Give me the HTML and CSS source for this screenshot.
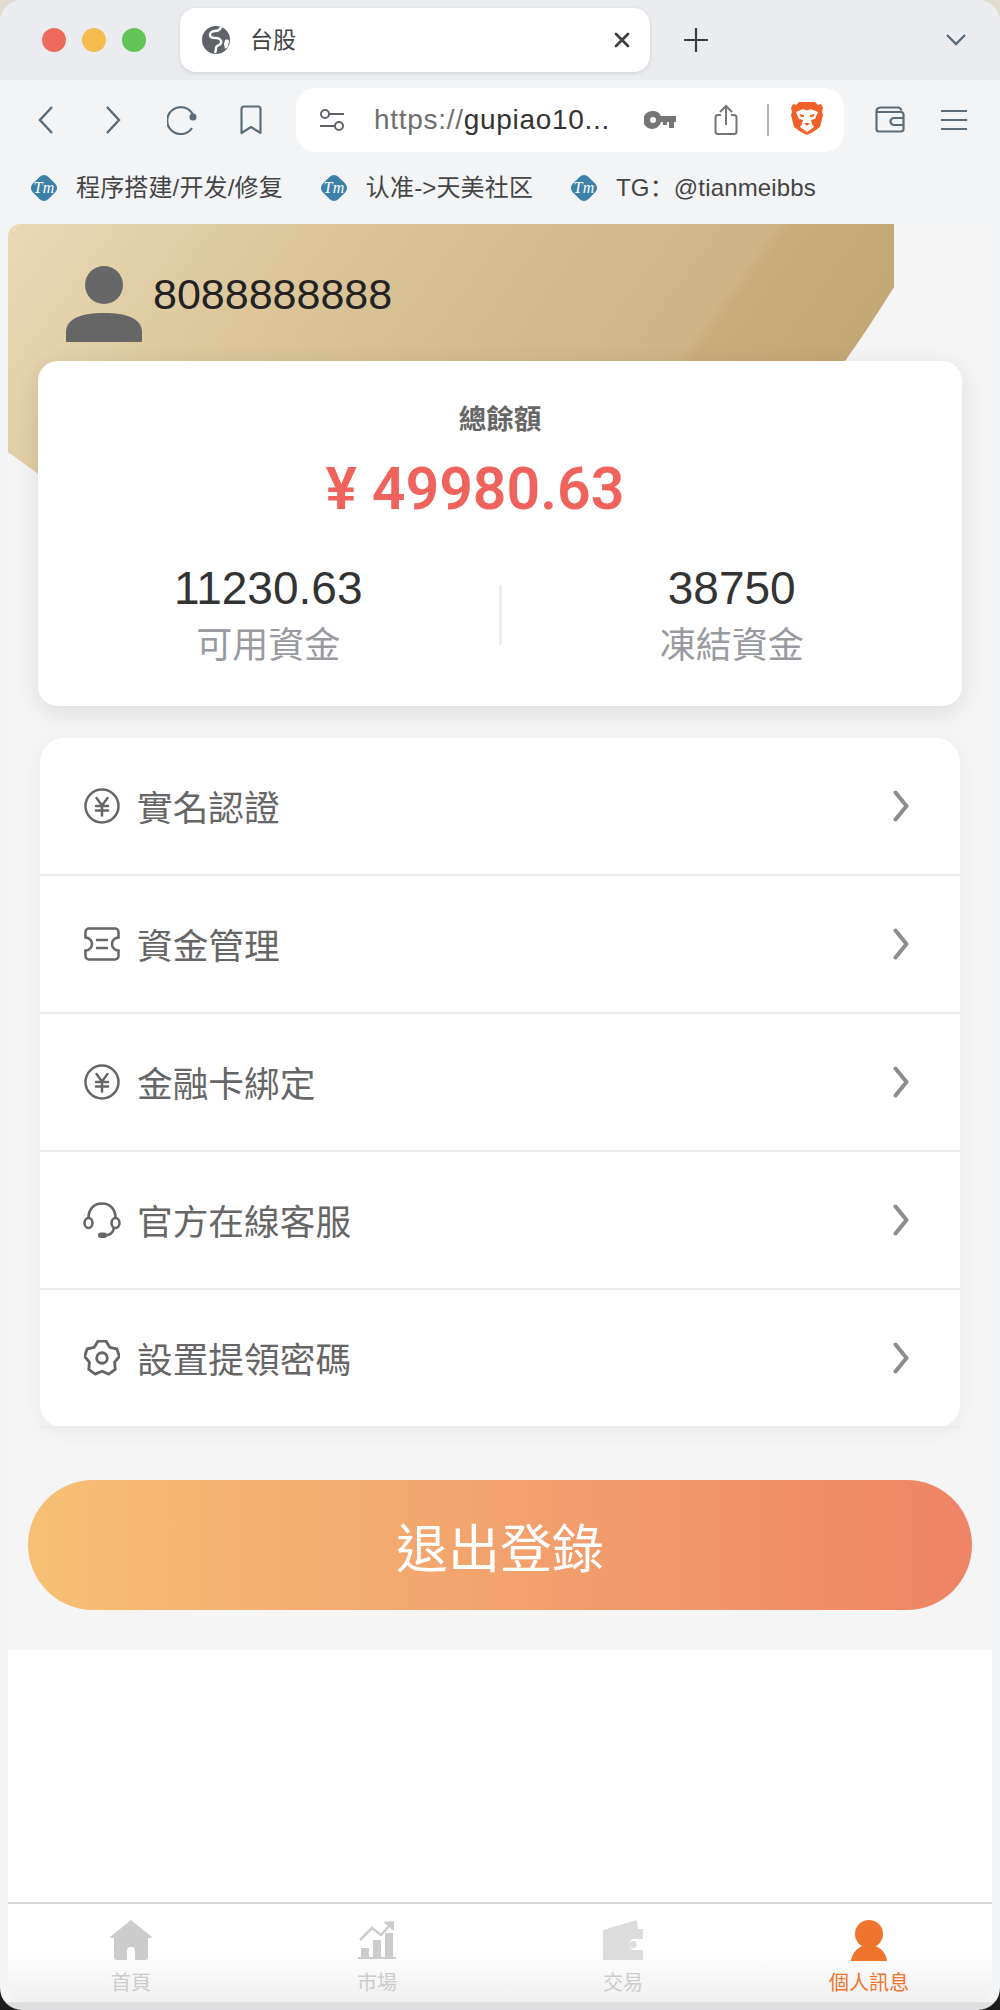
FILE: index.html
```html
<!DOCTYPE html>
<html lang="zh-Hant">
<head>
    <meta charset="UTF-8">
    <meta name="viewport" content="width=device-width, initial-scale=1.0">
    <title>台股</title>
    <link rel="stylesheet" href="styles.css">
</head>
<body>
    <svg class="defs" width="0" height="0">
        <symbol id="yen" viewBox="0 0 36 36">
            <circle cx="18" cy="18" r="16.5" fill="none" stroke="currentColor" stroke-width="2.5"/>
            <path d="M12.500 10l5.500 7.500 5.500-7.500M12 18h12M12 22.500h12M18 17.500v10" fill="none" stroke="currentColor" stroke-width="2.500" stroke-linecap="round"/>
        </symbol>
        <symbol id="arrow" viewBox="0 0 16 32">
            <path d="M2.500 2.500L13.500 16 2.500 29.500" fill="none" stroke="currentColor" stroke-width="4" stroke-linecap="round" stroke-linejoin="round"/>
        </symbol>
    </svg>

    <div class="window">
        <!-- tabs -->
        <div class="tabstrip">
            <div class="lights">
                <span class="light light-red"></span>
                <span class="light light-yellow"></span>
                <span class="light light-green"></span>
            </div>
            <div class="tab">
                <svg class="globe" viewBox="0 0 28 28" width="28" height="28">
                    <circle cx="14" cy="14" r="14" fill="#5f6368"/>
                    <path d="M19 1c-1 3-3 4-6 4S8 7 8 9s3 3 6 3 6 2 5 5-5 2-5 5 0 3-1 5" fill="none" stroke="#fff" stroke-width="2.400"/>
                    <path d="M23 14c2-1 4 0 4 1l-1 6-3 2-1-5z" fill="#fff"/>
                </svg>
                <span class="tab-title">台股</span>
                <svg class="tab-close" viewBox="0 0 16 16" width="16" height="16">
                    <path d="M2 2l12 12M14 2L2 14" stroke="#3c4043" stroke-width="2.800" stroke-linecap="round"/>
                </svg>
            </div>
            <svg class="tab-new" viewBox="0 0 24 24" width="24" height="24">
                <path d="M12 0v24M0 12h24" stroke="#3c4043" stroke-width="2.200"/>
            </svg>
            <svg class="tab-list" viewBox="0 0 20 12" width="20" height="12">
                <path d="M1 1l9 9 9-9" fill="none" stroke="#5b6c78" stroke-width="2.400"/>
            </svg>
        </div>

        <!-- toolbar -->
        <div class="toolbar">
            <svg class="tool tool-back" viewBox="0 0 16 28" width="16" height="28">
                <path d="M14 1L2 14l12 13" fill="none" stroke="#5b6c78" stroke-width="2.400"/>
            </svg>
            <svg class="tool tool-forward" viewBox="0 0 16 28" width="16" height="28">
                <path d="M2 1l12 13L2 27" fill="none" stroke="#5b6c78" stroke-width="2.400"/>
            </svg>
            <svg class="tool tool-reload" viewBox="0 0 30 30" width="30" height="30">
                <path d="M25 23a13.500 13.500 0 1 1 1-13" fill="none" stroke="#5b6c78" stroke-width="2.200"/>
                <circle cx="26" cy="12" r="3.500" fill="#5b6c78"/>
            </svg>
            <svg class="tool tool-mark" viewBox="0 0 22 30" width="22" height="30">
                <path d="M1.500 4a2.500 2.500 0 0 1 2.500-2.500h14a2.500 2.500 0 0 1 2.500 2.500v24L11 22l-9.500 6z" fill="none" stroke="#5b6c78" stroke-width="2.200" stroke-linejoin="round"/>
            </svg>

            <div class="urlbar">
                <svg class="url-tune" viewBox="0 0 26 24" width="26" height="24">
                    <circle cx="6" cy="6" r="4" fill="none" stroke="#5f6368" stroke-width="2"/>
                    <circle cx="20" cy="18" r="4" fill="none" stroke="#5f6368" stroke-width="2"/>
                    <path d="M10 6h15M1 18h15" stroke="#5f6368" stroke-width="2"/>
                </svg>
                <span class="url-text"><span class="url-scheme">https://</span>gupiao10...</span>
                <svg class="url-key" viewBox="0 0 32 20" width="32" height="20">
                    <path d="M9 1a9 9 0 0 1 8 5h15v6h-2v6h-5v-6h-2v3h-4v-3h-2A9 9 0 1 1 9 1zm0 6a3 3 0 1 0 0 6 3 3 0 0 0 0-6z" fill="#757575" fill-rule="evenodd"/>
                </svg>
                <svg class="url-share" viewBox="0 0 24 32" width="24" height="32">
                    <path d="M7 11H4a2.500 2.500 0 0 0-2.500 2.500v14A2.500 2.500 0 0 0 4 30h16a2.500 2.500 0 0 0 2.500-2.500v-14A2.500 2.500 0 0 0 20 11h-3M12 21V2M6 8l6-6 6 6" fill="none" stroke="#757575" stroke-width="2"/>
                </svg>
                <span class="url-sep"></span>
                <svg class="url-brave" viewBox="0 0 32 36" width="32" height="36">
                    <path d="M8 0h16l3 3 3-1 2 4-1 4 1 3-2 8-1 4-7 5-6 3-6-3-7-5-1-4-2-8 1-3-1-4 2-4 3 1z" fill="#ef6128"/>
                    <path d="M5 10l7-3 4 1.500L20 7l7 3-3 7-4 1 1 4 2 3-7 5-7-5 2-3 1-4-4-1z" fill="#fff"/>
                    <path d="M8 12l5 1 0 2-3 0zM24 12l-5 1 0 2 3 0zM13 21h6l-3 3z" fill="#ef6128"/>
                </svg>
            </div>

            <svg class="tool tool-wallet" viewBox="0 0 30 28" width="30" height="28">
                <path d="M1.500 6a4 4 0 0 1 4-4.500h18a4 4 0 0 1 3 3M1.500 6v17a2.500 2.500 0 0 0 2.500 2.500h22a2.500 2.500 0 0 0 2.500-2.500V8.500A2.500 2.500 0 0 0 26 6H1.500zM28.500 12H19a3.500 3.500 0 0 0 0 7h9.500" fill="none" stroke="#5b6c78" stroke-width="2.200"/>
            </svg>
            <svg class="tool tool-menu" viewBox="0 0 26 22" width="26" height="22">
                <path d="M0 2h26M0 11h26M0 20h26" stroke="#5b6c78" stroke-width="2"/>
            </svg>
        </div>

        <!-- bookmarks -->
        <div class="bookmarks" lang="zh-CN">
            <div class="bookmark">
                <svg viewBox="0 0 30 30" width="30" height="30">
                    <rect x="4" y="4" width="22" height="22" rx="6" transform="rotate(45 15 15)" fill="#3d81a9"/>
                    <text x="15" y="20" text-anchor="middle" class="tm-text">Tm</text>
                </svg>
                <span>程序搭建/开发/修复</span>
            </div>
            <div class="bookmark">
                <svg viewBox="0 0 30 30" width="30" height="30">
                    <rect x="4" y="4" width="22" height="22" rx="6" transform="rotate(45 15 15)" fill="#3d81a9"/>
                    <text x="15" y="20" text-anchor="middle" class="tm-text">Tm</text>
                </svg>
                <span>认准-&gt;天美社区</span>
            </div>
            <div class="bookmark">
                <svg viewBox="0 0 30 30" width="30" height="30">
                    <rect x="4" y="4" width="22" height="22" rx="6" transform="rotate(45 15 15)" fill="#3d81a9"/>
                    <text x="15" y="20" text-anchor="middle" class="tm-text">Tm</text>
                </svg>
                <span>TG：@tianmeibbs</span>
            </div>
        </div>

        <!-- page -->
        <div class="page">
            <div class="account">
                <div class="account-bg"></div>

                <div class="user">
                    <svg class="user-pic" viewBox="0 0 76 76" width="76" height="76">
                        <circle cx="38" cy="19" r="19" fill="#666"/>
                        <path d="M0 76V66C0 52 17 47 38 47s38 5 38 19v10z" fill="#666"/>
                    </svg>
                    <span class="user-name">8088888888</span>
                </div>

                <div class="balance">
                    <div class="balance-title">總餘額</div>
                    <div class="balance-total">¥ 49980.63</div>
                    <div class="stats">
                        <div class="stat">
                            <div class="stat-value">11230.63</div>
                            <div class="stat-label">可用資金</div>
                        </div>
                        <div class="stat-line"></div>
                        <div class="stat">
                            <div class="stat-value">38750</div>
                            <div class="stat-label">凍結資金</div>
                        </div>
                    </div>
                </div>

                <ul class="menu">
                    <li class="menu-row">
                        <svg class="menu-icon" width="36" height="36"><use href="#yen"/></svg>
                        <span>實名認證</span>
                        <svg class="menu-arrow" width="16" height="32"><use href="#arrow"/></svg>
                    </li>
                    <li class="menu-row">
                        <svg class="menu-icon" viewBox="0 0 36 36" width="36" height="36">
                            <path d="M5 2.500h26A3.500 3.500 0 0 1 34.500 6v5.500a6.500 6.500 0 0 0 0 13V30a3.500 3.500 0 0 1-3.500 3.500H5A3.500 3.500 0 0 1 1.500 30v-5.500a6.500 6.500 0 0 0 0-13V6A3.500 3.500 0 0 1 5 2.500zM12 14h12M12 22h12" fill="none" stroke="currentColor" stroke-width="2.500"/>
                        </svg>
                        <span>資金管理</span>
                        <svg class="menu-arrow" width="16" height="32"><use href="#arrow"/></svg>
                    </li>
                    <li class="menu-row">
                        <svg class="menu-icon" width="36" height="36"><use href="#yen"/></svg>
                        <span>金融卡綁定</span>
                        <svg class="menu-arrow" width="16" height="32"><use href="#arrow"/></svg>
                    </li>
                    <li class="menu-row">
                        <svg class="menu-icon menu-icon-wide" viewBox="0 0 38 36" width="38" height="36">
                            <path d="M5.500 16C5.500 7 11 1.500 19 1.500S32.500 7 32.500 16" fill="none" stroke="currentColor" stroke-width="2.600"/>
                            <ellipse cx="5.500" cy="21" rx="4" ry="5" fill="none" stroke="currentColor" stroke-width="2.600"/>
                            <ellipse cx="32.500" cy="21" rx="4" ry="5" fill="none" stroke="currentColor" stroke-width="2.600"/>
                            <path d="M31 26c-1 5-5 7.500-10 7.500" fill="none" stroke="currentColor" stroke-width="2.600"/>
                            <rect x="15" y="30.500" width="9" height="5.500" rx="2.700" fill="currentColor"/>
                        </svg>
                        <span>官方在線客服</span>
                        <svg class="menu-arrow" width="16" height="32"><use href="#arrow"/></svg>
                    </li>
                    <li class="menu-row">
                        <svg class="menu-icon" viewBox="1 2 34 34" width="36" height="36">
                            <path d="M14.300 2.900h7.400L25.350 8.900 32.100 10.500 34.400 17.600 29.900 22.900 30.500 29.800 24.400 34.200 18 31.500 11.600 34.200 5.500 29.800 6.100 22.900 1.600 17.600 3.900 10.500 10.650 8.900z" fill="none" stroke="currentColor" stroke-width="2.700" stroke-linejoin="round"/>
                            <circle cx="18" cy="19" r="5" fill="none" stroke="currentColor" stroke-width="2.700"/>
                        </svg>
                        <span>設置提領密碼</span>
                        <svg class="menu-arrow" width="16" height="32"><use href="#arrow"/></svg>
                    </li>
                </ul>

                <button class="logout" type="button">退出登錄</button>
            </div>

            <div class="page-blank"></div>

            <!-- bottom nav -->
            <nav class="nav">
                <div class="nav-item">
                    <svg class="nav-icon" viewBox="0 0 42 40" width="42" height="40">
                        <path d="M21 0l21 17-1 1h-3v19a3 3 0 0 1-3 3H25V31a4 4 0 0 0-8 0v9H7a3 3 0 0 1-3-3V18H1l-1-1z" fill="#ccc"/>
                    </svg>
                    <span>首頁</span>
                </div>
                <div class="nav-item">
                    <svg class="nav-icon" viewBox="0 0 38 40" width="38" height="40">
                        <path d="M3 28h8v9H3zM15 20h8v17h-8zM27 13h8v24h-8zM0 37h38v2H0z" fill="#ccc"/>
                        <path d="M2 20L14 8l9 7 9-10" fill="none" stroke="#ccc" stroke-width="2.500"/>
                        <path d="M25 2l11-1v10z" fill="#ccc"/>
                    </svg>
                    <span>市場</span>
                </div>
                <div class="nav-item">
                    <svg class="nav-icon" viewBox="0 0 40 40" width="40" height="40">
                        <path d="M0 10L34 0l1 9h5v10H30a6 6 0 0 0 0 11h10v10H1a1 1 0 0 1-1-1z" fill="#dcdcdc"/>
                        <circle cx="30" cy="24.500" r="3.500" fill="#dcdcdc"/>
                    </svg>
                    <span>交易</span>
                </div>
                <div class="nav-item nav-item-on">
                    <svg class="nav-icon" viewBox="0 0 36 42" width="36" height="42">
                        <circle cx="18" cy="15" r="14" fill="#ef742d"/>
                        <path d="M0 42c1-9 8-16 18-16s17 7 18 16z" fill="#ef742d"/>
                    </svg>
                    <span>個人訊息</span>
                </div>
            </nav>
        </div>
    </div>
</body>
</html>
```

FILE: styles.css
```css
* {
    box-sizing: border-box;
}

html, body {
    margin: 0;
    padding: 0;
}

body {
    width: 1000px;
    height: 2010px;
    overflow: hidden;
    background: linear-gradient(#e2dbd0 50%, #1c1c1c 50%);
    font-family: "Liberation Sans", "Noto Sans CJK TC", sans-serif;
}

ul {
    margin: 0;
    padding: 0;
    list-style: none;
}

.defs {
    position: absolute;
}

.tm-text {
    font-family: "Liberation Serif", serif;
    font-style: italic;
    font-size: 16px;
    fill: #fff;
}

.window {
    display: flex;
    flex-direction: column;
    width: 1000px;
    height: 2010px;
    border-radius: 22px;
    background: linear-gradient(#f3f4f6 2002px, #dfdfe1 2002px);
    overflow: hidden;
}

/* tabs */
.tabstrip {
    display: flex;
    align-items: center;
    flex: none;
    height: 80px;
    background-color: #ebecf0;
}

.lights {
    display: flex;
    gap: 16px;
    width: 180px;
    padding-left: 42px;
}

.light {
    width: 24px;
    height: 24px;
    border-radius: 50%;
}

.light-red {
    background-color: #ee6a5f;
}

.light-yellow {
    background-color: #f5bd4f;
}

.light-green {
    background-color: #61c454;
}

.tab {
    display: flex;
    align-items: center;
    width: 470px;
    height: 64px;
    padding: 0 22px;
    border-radius: 16px;
    background-color: #fff;
    box-shadow: 0 1px 4px rgba(0, 0, 0, 0.12);
}

.tab-title {
    margin-left: 20px;
    margin-bottom: 4px;
    font-family: "Noto Sans CJK SC", sans-serif;
    font-size: 23px;
    line-height: 30px;
    color: #444;
}

.tab-close {
    margin-left: auto;
    margin-right: -2px;
}

.tab-new {
    margin-left: 34px;
}

.tab-list {
    margin-left: auto;
    margin-right: 34px;
}

/* toolbar */
.toolbar {
    display: flex;
    align-items: center;
    flex: none;
    height: 80px;
    background-color: #f3f4f6;
}

.tool {
    flex: none;
}

.tool-back {
    margin-left: 38px;
}

.tool-forward {
    margin-left: 51px;
}

.tool-reload {
    margin-left: 46px;
}

.tool-mark {
    margin-left: 43px;
}

.urlbar {
    display: flex;
    align-items: center;
    width: 548px;
    height: 64px;
    margin-left: 34px;
    padding-left: 23px;
    border-radius: 20px;
    background-color: #fff;
}

.url-text {
    width: 270px;
    margin-left: 29px;
    font-size: 28px;
    letter-spacing: 0.7px;
    white-space: nowrap;
    color: #333;
}

.url-scheme {
    color: #6f6f6f;
}

.url-key {
    margin-left: 0;
}

.url-share {
    margin-left: 38px;
}

.url-sep {
    width: 2px;
    height: 32px;
    margin-left: 29px;
    background-color: #b4b4b4;
}

.url-brave {
    margin-left: 22px;
}

.tool-wallet {
    margin-left: 31px;
}

.tool-menu {
    margin-left: 36px;
}

/* bookmarks */
.bookmarks {
    display: flex;
    align-items: center;
    flex: none;
    height: 64px;
    padding-left: 29px;
    padding-bottom: 8px;
    background-color: #f3f4f6;
}

.bookmark {
    display: flex;
    align-items: center;
    gap: 17px;
    margin-right: 36px;
    font-family: "Liberation Sans", "Noto Sans CJK SC", sans-serif;
    font-size: 24px;
    letter-spacing: 0.15px;
    line-height: 30px;
    white-space: nowrap;
    color: #444;
}

/* page */
.page {
    display: flex;
    flex-direction: column;
    flex: 1;
    margin: 0 8px 8px;
    border-radius: 12px;
    background-color: #fff;
    overflow: hidden;
}

.account {
    position: relative;
    flex: none;
    height: 1426px;
    padding-top: 42px;
    background-color: #f5f5f6;
}

.account-bg {
    position: absolute;
    top: 0;
    left: 0;
    width: 886px;
    height: 260px;
    background: linear-gradient(126deg, #e9dab7 0%, #dcc69a 28%, #cdb486 71.5%, #cbb181 72%, #c8ad7c 73%, #bfa270 100%);
    clip-path: path("M0 0H886V63Q860 105 837 137L44 260L0 228Z");
}

.user {
    position: relative;
    display: flex;
    align-items: center;
    padding-left: 58px;
}

.user-name {
    margin-left: 11px;
    margin-bottom: 20px;
    font-size: 43px;
    line-height: 50px;
    color: #222;
}

.balance {
    position: relative;
    margin: 19px 30px 0;
    padding: 39px 0 38px;
    border-radius: 20px;
    background-color: #fff;
    box-shadow: 0 6px 24px rgba(0, 0, 0, 0.1);
    text-align: center;
}

.balance-title {
    font-size: 27.500px;
    font-weight: bold;
    line-height: 40px;
    color: #666;
}

.balance-total {
    margin-top: 14px;
    padding-right: 50px;
    font-family: Roboto, "Liberation Sans", sans-serif;
    font-size: 59px;
    font-weight: 600;
    line-height: 70px;
    color: #f0635d;
}

.stats {
    display: flex;
    align-items: center;
    margin-top: 41px;
}

.stat {
    flex: 1;
}

.stat-value {
    font-size: 46px;
    line-height: 46px;
    color: #333;
}

.stat-label {
    margin-top: 13px;
    font-size: 36px;
    line-height: 44px;
    color: #999aa0;
}

.stat-line {
    width: 3px;
    height: 60px;
    margin-bottom: 4px;
    background-color: #eee;
}

.menu {
    position: relative;
    margin: 32px 32px 0;
    border-radius: 24px;
    background-color: #fff;
    box-shadow: 0 4px 20px rgba(0, 0, 0, 0.05);
}

.menu-row {
    display: flex;
    align-items: center;
    height: 138px;
    padding: 0 51px 0 44px;
    border-bottom: 2px solid #ececec;
    font-size: 35.700px;
    color: #666;
}

.menu-row span {
    margin-bottom: 2px;
}

.menu-icon {
    flex: none;
    margin-right: 17px;
}

.menu-icon-wide {
    margin-left: -1px;
    margin-right: 16px;
}

.menu-arrow {
    margin-left: auto;
    color: #8c8c8c;
}

.logout {
    display: block;
    position: relative;
    width: 944px;
    height: 130px;
    margin: 52px 20px 0;
    border: none;
    border-radius: 65px;
    background: linear-gradient(90deg, #f6c074, #ef8466);
    font-family: "Noto Sans CJK TC", sans-serif;
    font-size: 52px;
    color: #fff;
}

.page-blank {
    flex: 1;
}

/* bottom nav */
.nav {
    display: grid;
    grid-template-columns: repeat(4, 1fr);
    flex: none;
    height: 100px;
    padding-top: 15px;
    border-top: 2px solid #d8d8d8;
    background: linear-gradient(#fff 45%, #f0f0f0);
}

.nav-item {
    display: flex;
    flex-direction: column;
    align-items: center;
    font-size: 20px;
    line-height: 28px;
    color: #ccc;
}

.nav-icon {
    display: block;
    height: 42px;
    margin-bottom: 8px;
}

.nav-item-on {
    color: #ef742d;
}
```
